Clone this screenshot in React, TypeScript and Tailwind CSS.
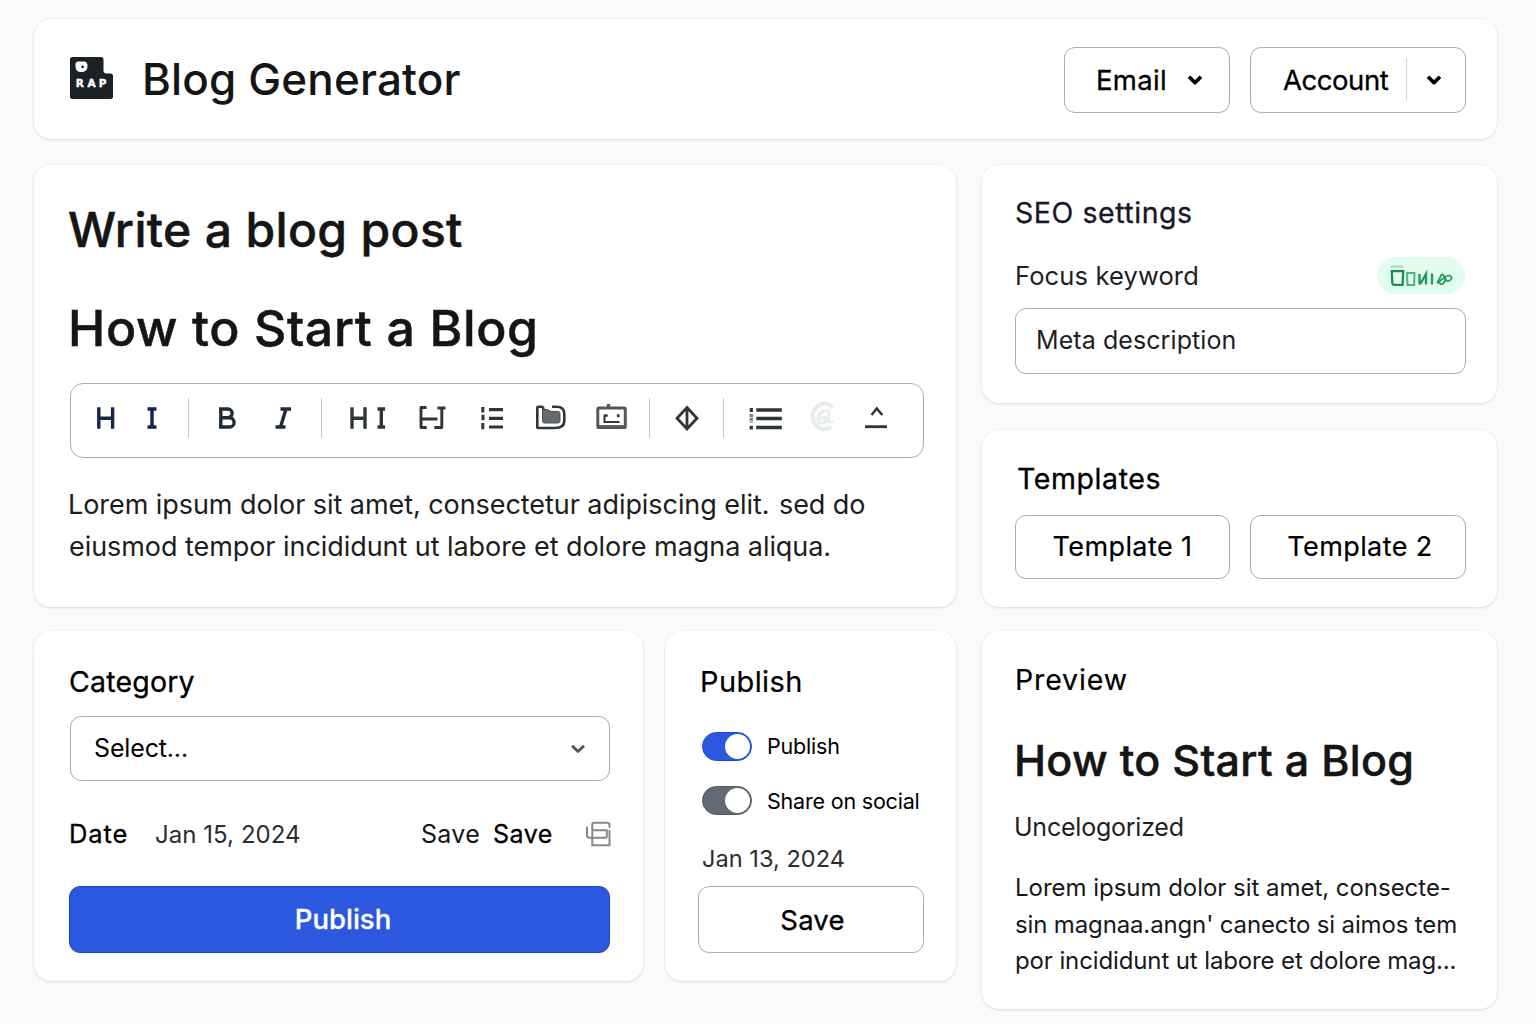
import React from "react";

const card = "rounded-[17px] bg-white shadow-[0_1px_3px_rgba(15,23,42,0.12),0_0_2px_rgba(15,23,42,0.06)]";
const box = "rounded-[11px] border border-[#acadb0] bg-white";
// Weight halfway between regular and medium
const semi = "font-normal [-webkit-text-stroke:0.3px_currentColor]";
// Weight halfway between medium and semibold
const heading = "font-medium [-webkit-text-stroke:0.5px_currentColor] whitespace-nowrap text-[#151515]";

type IconProps = { w: number; className?: string; children: React.ReactNode };

function Icon({ w, className = "", children }: IconProps) {
  return (
    <svg
      width={w}
      height={36}
      viewBox={`0 0 ${w} 36`}
      fill="none"
      stroke="currentColor"
      strokeWidth={3.4}
      className={`shrink-0 ${className}`}
    >
      {children}
    </svg>
  );
}

function Divider({ className }: { className: string }) {
  return <div className={`h-10 w-px shrink-0 bg-[#c4c5c8] ${className}`} />;
}

function Chevron({ className = "", width = 3.6 }: { className?: string; width?: number }) {
  return (
    <svg width="16" height="12" viewBox="0 0 16 12" fill="none" stroke="currentColor" strokeWidth={width} className={className}>
      <path d="M2 2.800l6 5.800 6-5.800" strokeLinejoin="round" />
    </svg>
  );
}

function Logo() {
  return (
    <svg width="43" height="42" viewBox="0 0 43 42" className="mt-[38px] ml-9 shrink-0">
      <path
        d="M2.500 0H31a2.500 2.500 0 0 1 2.500 2.500v11a3 3 0 0 0 3 3H40.500a2.500 2.500 0 0 1 2.500 2.500V39.500a2.500 2.500 0 0 1-2.500 2.500H2.500A2.500 2.500 0 0 1 0 39.500V2.500A2.500 2.500 0 0 1 2.500 0Z"
        fill="#1a2226"
      />
      <path d="M5.500 7.500q0-3 3-3h5.500q3.500 0 3.500 4.500 0 6-6.500 6-5.500 0-5.500-6Z" fill="#fff" />
      <circle cx="12.600" cy="9.800" r="1.400" fill="#1a2226" />
      <g fill="#fff" fontFamily="DejaVu Sans, sans-serif" fontWeight="700" fontSize="10.500" stroke="#fff" strokeWidth="0.400">
        <text x="5.800" y="30.300">R</text>
        <text x="17.600" y="30.300">A</text>
        <text x="28.800" y="30.300">P</text>
      </g>
    </svg>
  );
}

function Toolbar() {
  return (
    <div className="mt-[25px] ml-px flex h-[75px] w-[854px] items-center rounded-[13px] border border-[#acadb0] pb-[6px] text-[#2f3639]">
      <Icon w={20} className="ml-[25px] text-[#15244c]">
        <path d="M2.800 7.300v21.400M16.600 7.300v21.400M3 18.200h14" />
      </Icon>
      <Icon w={12} className="ml-[30px] text-[#15244c]">
        <path d="M1.500 9h9M1.500 27h9M6 9v18" />
      </Icon>
      <Divider className="ml-[30px]" />
      <Icon w={20} className="ml-[28px] text-[#1f2c38]">
        <path d="M3.800 9v18M2 9h8.700a4.300 4.300 0 0 1 0 8.800H4M11 17.800h1.500a4.600 4.600 0 0 1 0 9.200H2" strokeLinejoin="round" />
      </Icon>
      <Icon w={18} className="ml-[37px] text-[#1f2c38]">
        <path d="M6.500 9h10.500M1.500 27h10M12 9L6.500 27" />
      </Icon>
      <Divider className="ml-[29px]" />
      <Icon w={20} className="ml-[27px]">
        <path d="M3 7.300v21.400M16 7.300v21.400M3 18.200h13" />
      </Icon>
      <Icon w={13} className="ml-[6px]">
        <path d="M2.500 9h7.600M2.500 27h7.600M6.300 9v18" />
      </Icon>
      <Icon w={30} className="ml-[30px]">
        <path d="M8.500 7.500H3v20h5.700M3 19h16.500M19.500 8h8M23.800 8v19.500h-7.500" strokeWidth="2.900" strokeLinejoin="round" />
      </Icon>
      <Icon w={26} className="ml-[31px]">
        <path d="M10 9.700h14M10 18.400h14M10 27h14" strokeWidth="3.200" />
        <path d="M3.800 7v5.500M4 14.800v5.500M3.800 23v6.300" strokeWidth="3" />
      </Icon>
      <Icon w={32} className="ml-[30px]">
        <path d="M2.300 6.500v20.800q0 .7.700.7H20q9.300 0 9.300-7V14q0-7.300-8-7.300H17M2.300 6.800H6.500q2 0 2 3.200" strokeWidth="2.600" />
        <path d="M7.500 9.500h5l3.500 2h7q2 0 2 2v7.500q0 2-2 2H9.500q-2 0-2-2Z" fill="#666a6c" stroke="#4d5254" strokeWidth="1" />
      </Icon>
      <Icon w={33} className="ml-[28px] text-[#54595b]">
        <rect x="2.800" y="8" width="27.500" height="19.500" rx="1" strokeWidth="3" />
        <path d="M2.800 27h27.500" strokeWidth="3.800" />
        <path d="M13.500 7V4" strokeWidth="3.500" />
        <path d="M9.500 16v6h15" stroke="#34383a" strokeWidth="2" />
        <path d="M8.700 15.500h4M23.200 14.300v3" stroke="#34383a" strokeWidth="2.600" />
      </Icon>
      <Divider className="ml-[21px]" />
      <Icon w={26} className="ml-[24px]">
        <path d="M13 7.500L23 18.300 13 29 3 18.300ZM13 7.500V29" strokeWidth="2.800" />
      </Icon>
      <Divider className="ml-[23px]" />
      <Icon w={35} className="ml-[24px]">
        <path d="M8.300 9.900h25.500M8.300 18.600h25.500M8.300 27.500h25.500" strokeWidth="3.500" />
        <path d="M3.300 8v4M3.300 25.800v3.700" strokeWidth="3.200" />
        <path d="M3.300 14v8.500" stroke="#7c8082" strokeWidth="3.600" strokeDasharray="3 .8" />
      </Icon>
      <Icon w={33} className="ml-[22px] text-[#e9ecec]">
        <path d="M28 7.500Q24 3.500 17.500 3.500A13.500 13.500 0 0 0 17.500 29.500Q23 29.500 26 27" strokeWidth="4.200" />
        <path d="M25 10.500q-11-.5-12 7.500-.5 6.500 5.500 5 5-2 6-11.500l-1.200 9q1 2.500 5 .5" strokeWidth="3" />
        <path d="M15 18l7-1" strokeWidth="3.500" />
      </Icon>
      <Icon w={24} className="ml-[26px]">
        <path d="M7.500 15L12.800 8.500 18.200 15" strokeWidth="2.500" />
        <path d="M1 26.700h22" strokeWidth="2.800" />
      </Icon>
    </div>
  );
}

function Toggle({ on }: { on: boolean }) {
  return (
    <div
      className={`flex h-[29px] w-[50px] items-center justify-end rounded-full border pr-px ${
        on ? "border-[#1f49d6] bg-[#2b58de]" : "border-[#53585f] bg-[#646a73]"
      }`}
    >
      <div className="size-[25px] rounded-full bg-white" />
    </div>
  );
}

function SeoBadge() {
  return (
    <div className="flex h-[37px] w-[88px] items-center justify-center rounded-full bg-[#e2fcf0]">
      <svg width="64" height="26" viewBox="0 0 64 26" fill="none" stroke="#27995a">
        <path d="M2 3.500h12" stroke="#8fd0ad" strokeWidth="1.800" strokeDasharray="2 .6" />
        <path d="M2.800 8.200h11.400l-.6 13.600H5.500q-2 0-2.200-2Z" stroke="#1d8d4e" strokeWidth="2.300" />
        <path d="M18 10h7.500l-.3 12h-6.700Z" stroke="#4fb37c" strokeWidth="2" />
        <path d="M30.500 21.500V11M31 21.500l6-10.500v10.500M43 10.500v11" strokeWidth="2.400" />
        <path d="M48 20.500l4.500-9q2-.5 3 3l.5 3.500q-2 4-4.500 3t.5-4q5-4.500 8.500-4.500 3 1 1.500 4-2.500 2.500-4.500 1l-1.500-3" strokeWidth="1.700" />
      </svg>
    </div>
  );
}

export default function App() {
  return (
    <div className="flex h-[1024px] w-[1536px] flex-col overflow-hidden bg-[#f9fafc] pt-[19px] pl-[34px] font-['Inter',sans-serif] text-[#111214]">
      <header className={`flex h-[120px] w-[1463px] ${card}`}>
        <Logo />
        <h1 className="ml-[29px] h-[120px] text-[44px] leading-[121px] font-medium tracking-[0.150px] whitespace-nowrap text-[#151515]">
          Blog Generator
        </h1>
        <div className={`mt-[28px] mr-[31px] ml-auto flex gap-5 text-[27.500px] text-black ${semi}`}>
          <button className={`flex h-[66px] w-[166px] items-center pl-[31px] ${box}`}>
            <span className="w-[69px] pt-px text-left tracking-[0.300px]">Email</span>
            <Chevron className="ml-[22px]" />
          </button>
          <button className={`flex h-[66px] w-[216px] items-center pl-[32px] ${box}`}>
            <span className="w-[107px] pt-px text-left tracking-[-0.450px]">Account</span>
            <span className="mb-[3px] ml-[16px] h-[42px] w-px bg-[#d3d4d6]" />
            <Chevron className="ml-[19px]" />
          </button>
        </div>
      </header>

      <main className="mt-[26px] flex gap-[26px]">
        <div className="flex w-[922px] flex-col gap-6">
          <section className={`h-[442px] pt-[35px] pl-[35px] ${card}`}>
            <h2 className={`-ml-px h-[60px] text-[48px] leading-[60px] tracking-[0.350px] ${heading}`}>Write a blog post</h2>
            <h3 className={`mt-[38px] -ml-px h-[60px] text-[50px] leading-[60px] tracking-[0.650px] ${heading}`}>How to Start a Blog</h3>
            <Toolbar />
            <div className="mt-[26px] text-[27px] leading-[41.500px] font-normal tracking-[-0.060px] whitespace-nowrap text-[#1c1d20]">
              <p className="-ml-px">
                Lorem ipsum dolor sit amet, consectetur adipiscing elit. <span className="ml-[2px]">sed do</span>
              </p>
              <p>eiusmod tempor incididunt ut labore et dolore magna aliqua.</p>
            </div>
          </section>

          <div className="flex gap-[22px]">
            <section className={`h-[350px] w-[609px] pt-[33px] pl-[35px] ${card}`}>
              <h4 className={`h-9 text-[28.500px] leading-9 tracking-[0.200px] text-black ${semi}`}>Category</h4>
              <div className={`mt-[16px] ml-px flex h-[65px] w-[540px] items-center ${box}`}>
                <span className="ml-[23px] text-[25px] font-normal tracking-[-0.150px] text-black">Select...</span>
                <Chevron className="mr-[23px] ml-auto text-[#54565c]" width={2.8} />
              </div>
              <div className="mt-[35px] flex h-9 items-center whitespace-nowrap">
                <span className={`w-[86px] text-[25.500px] tracking-[0.900px] text-black ${semi}`}>Date</span>
                <span className="w-[266px] pt-px text-[24px] font-normal tracking-[0.050px] text-[#2b2d31]">Jan 15, 2024</span>
                <span className="w-[72px] pt-px text-[25px] font-normal tracking-[0.300px] text-[#15171a]">Save</span>
                <span className={`w-[93px] pt-px text-[25px] tracking-[0.500px] text-black ${semi}`}>Save</span>
                <svg width="25" height="26" viewBox="0 0 25 26" fill="none" stroke="#85888b" strokeWidth="2">
                  <path d="M6.300 16.700V3.200q0-1.500 1.500-1.500H21q2.500 0 2.500 2.500v2.500" />
                  <path d="M6.300 9.300h14.500v7.400M1 5.700v8.500q0 2.500 2.500 2.500h17.300M6.300 16.700v7.600h17.200V9" />
                </svg>
              </div>
              <button className="mt-[34px] flex h-[67px] w-[541px] items-center justify-center rounded-[11px] border border-[#1c45cf] bg-[#2b58de] pl-[7px] text-[27.500px] font-medium text-white [-webkit-text-stroke:0.300px_currentColor]">
                Publish
              </button>
            </section>

            <section className={`h-[350px] w-[291px] pt-[33px] pl-[35px] ${card}`}>
              <h4 className="h-9 text-[29px] leading-9 font-normal tracking-[0.400px] text-black [-webkit-text-stroke:0.200px_currentColor]">
                Publish
              </h4>
              <div className="mt-[32px] ml-[2px] flex h-[29px] items-center gap-[15px]">
                <Toggle on />
                <span className="text-[21.500px] font-normal tracking-[-0.200px] text-black">Publish</span>
              </div>
              <div className="mt-[25px] ml-[2px] flex h-[29px] items-center gap-[15px]">
                <Toggle on={false} />
                <span className="pt-[2px] text-[21.500px] font-normal tracking-[-0.200px] whitespace-nowrap text-black">Share on social</span>
              </div>
              <p className="mt-[28px] ml-[2px] h-8 text-[23.500px] leading-8 font-normal tracking-[0.050px] text-[#2b2d31]">Jan 13, 2024</p>
              <button className={`mt-[11px] -ml-[2px] flex h-[67px] w-[226px] items-center justify-center pt-[3px] pl-[3px] text-[27.500px] tracking-[0.200px] text-black ${semi} ${box}`}>
                Save
              </button>
            </section>
          </div>
        </div>

        <div className="flex w-[515px] flex-col">
          <section className={`h-[238px] pt-[30px] pl-[33px] ${card}`}>
            <h4 className={`h-9 text-[28.500px] leading-9 tracking-[0.550px] text-[#151826] ${semi}`}>SEO settings</h4>
            <div className="mt-[26px] flex h-[37px] w-[450px] items-center justify-between">
              <span className="pt-px text-[25.500px] font-normal tracking-[0.130px] text-[#1d1f23]">Focus keyword</span>
              <SeoBadge />
            </div>
            <div className={`mt-[14px] flex h-[66px] w-[451px] items-center pl-[20px] text-[25px] font-normal tracking-[0.080px] text-[#1d1f23] ${box}`}>
              Meta description
            </div>
          </section>

          <section className={`mt-[27px] h-[177px] pt-[31px] pl-[33px] ${card}`}>
            <h4 className={`ml-[2px] h-9 text-[28.500px] leading-9 tracking-[0.600px] text-black ${semi}`}>Templates</h4>
            <div className="mt-[18px] flex gap-5 text-[27px] font-normal tracking-[0.400px] text-black [-webkit-text-stroke:0.200px_currentColor]">
              <button className={`h-[64px] w-[215px] ${box}`}>Template 1</button>
              <button className={`h-[64px] w-[216px] pl-[4px] ${box}`}>Template 2</button>
            </div>
          </section>

          <section className={`mt-6 h-[378px] pt-[31px] pl-[33px] ${card}`}>
            <h4 className="h-9 text-[28.500px] leading-9 font-normal tracking-[0.850px] text-black [-webkit-text-stroke:0.200px_currentColor]">
              Preview
            </h4>
            <h3 className={`mt-[33px] -ml-px h-[58px] text-[43px] leading-[58px] tracking-[0.320px] ${heading}`}>How to Start a Blog</h3>
            <p className="mt-[20px] -ml-px h-9 text-[25px] leading-9 font-normal tracking-[-0.230px] text-[#1d1f23]">Uncelogorized</p>
            <div className="mt-[25px] text-[24px] leading-[36.500px] font-normal whitespace-nowrap text-[#17181b]">
              <p className="tracking-[-0.030px]">Lorem ipsum dolor sit amet, consecte-</p>
              <p className="tracking-[-0.140px]">sin magnaa.angn&#39; canecto si aimos tem</p>
              <p className="tracking-[-0.120px]">por incididunt ut labore et dolore mag...</p>
            </div>
          </section>
        </div>
      </main>
    </div>
  );
}
